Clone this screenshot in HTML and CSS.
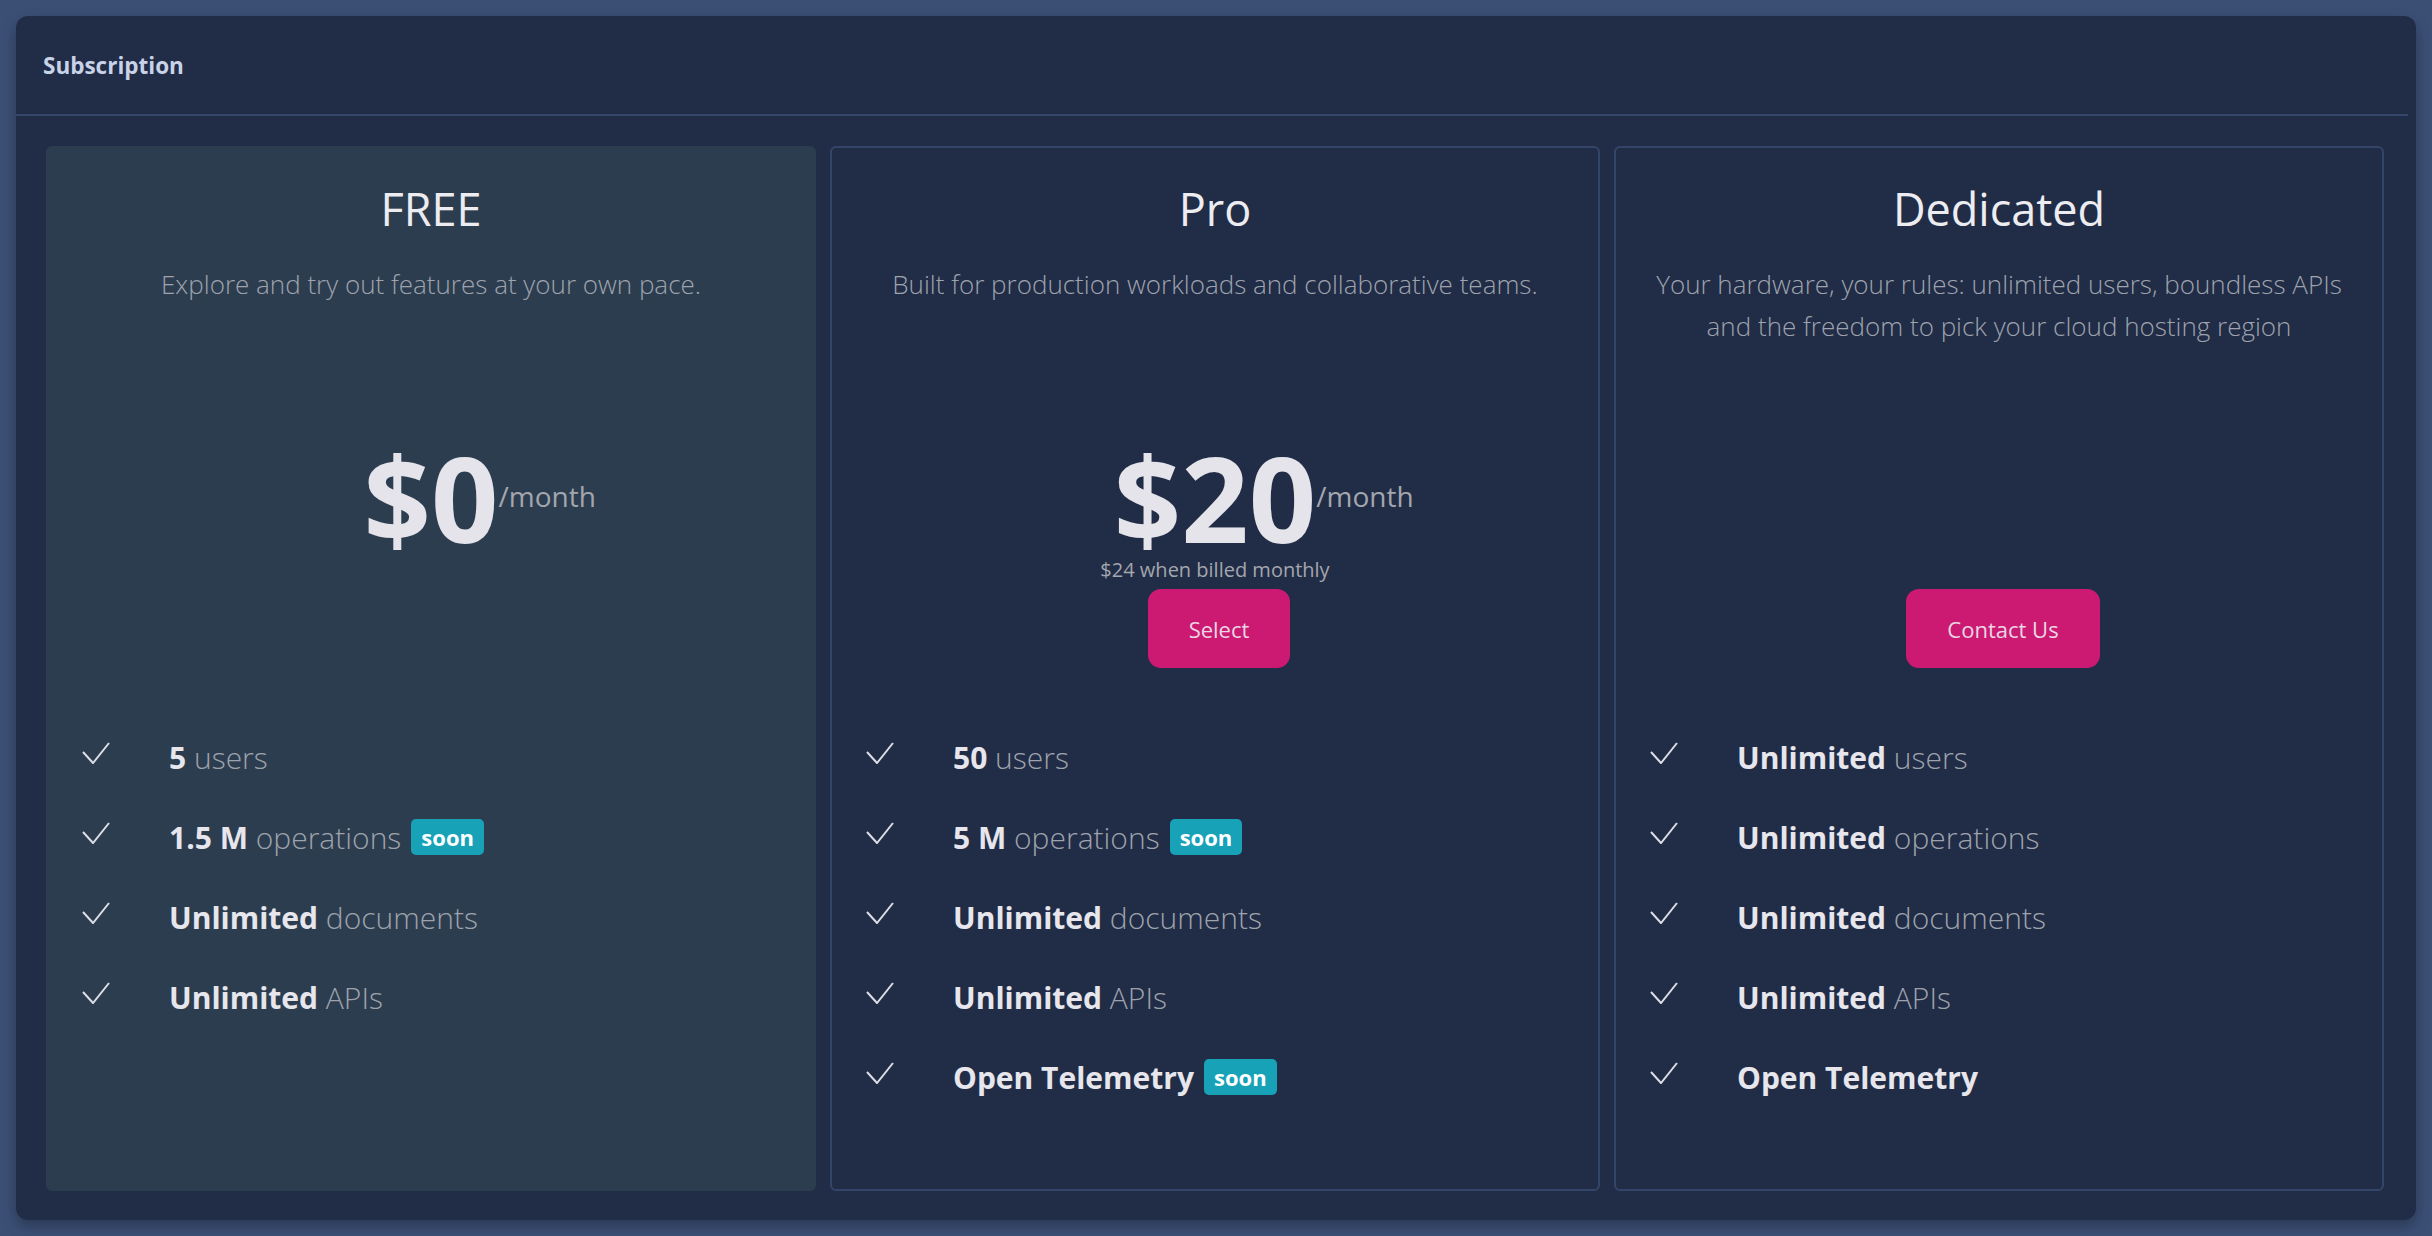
FILE: index.html
```html
<!DOCTYPE html>
<html lang="en">
<head>
<meta charset="utf-8">
<title>Subscription</title>
<link rel="stylesheet" href="styles.css">
</head>
<body>
<div class="panel">
  <div class="panel-header">
    <h1 class="panel-title">Subscription</h1>
  </div>
  <div class="plans">
    <section class="plan plan-free">
      <div class="plan-head">
        <h2 class="plan-name">FREE</h2>
        <p class="plan-desc">Explore and try out features at your own pace.</p>
      </div>
      <div class="plan-price"><div class="price">$0<span class="per">/month</span></div></div>
      <div class="plan-note"></div>
      <div class="plan-action"></div>
      <ul class="features">
        <li><svg class="check" viewBox="0 0 28 22"><path d="M1 10 L11 21 L27 1"/></svg><span class="label"><b>5</b> users</span></li>
        <li><svg class="check" viewBox="0 0 28 22"><path d="M1 10 L11 21 L27 1"/></svg><span class="label"><b>1.5 M</b> operations</span><span class="badge">soon</span></li>
        <li><svg class="check" viewBox="0 0 28 22"><path d="M1 10 L11 21 L27 1"/></svg><span class="label"><b>Unlimited</b> documents</span></li>
        <li><svg class="check" viewBox="0 0 28 22"><path d="M1 10 L11 21 L27 1"/></svg><span class="label"><b>Unlimited</b> APIs</span></li>
      </ul>
    </section>
    <section class="plan">
      <div class="plan-head">
        <h2 class="plan-name">Pro</h2>
        <p class="plan-desc">Built for production workloads and collaborative teams.</p>
      </div>
      <div class="plan-price"><div class="price">$20<span class="per">/month</span></div></div>
      <div class="plan-note">$24 when billed monthly</div>
      <div class="plan-action"><button class="btn">Select</button></div>
      <ul class="features">
        <li><svg class="check" viewBox="0 0 28 22"><path d="M1 10 L11 21 L27 1"/></svg><span class="label"><b>50</b> users</span></li>
        <li><svg class="check" viewBox="0 0 28 22"><path d="M1 10 L11 21 L27 1"/></svg><span class="label"><b>5 M</b> operations</span><span class="badge">soon</span></li>
        <li><svg class="check" viewBox="0 0 28 22"><path d="M1 10 L11 21 L27 1"/></svg><span class="label"><b>Unlimited</b> documents</span></li>
        <li><svg class="check" viewBox="0 0 28 22"><path d="M1 10 L11 21 L27 1"/></svg><span class="label"><b>Unlimited</b> APIs</span></li>
        <li><svg class="check" viewBox="0 0 28 22"><path d="M1 10 L11 21 L27 1"/></svg><span class="label"><b>Open Telemetry</b></span><span class="badge">soon</span></li>
      </ul>
    </section>
    <section class="plan">
      <div class="plan-head">
        <h2 class="plan-name">Dedicated</h2>
        <p class="plan-desc">Your hardware, your rules: unlimited users, boundless APIs and the freedom to pick your cloud hosting region</p>
      </div>
      <div class="plan-price"></div>
      <div class="plan-note"></div>
      <div class="plan-action"><button class="btn">Contact Us</button></div>
      <ul class="features">
        <li><svg class="check" viewBox="0 0 28 22"><path d="M1 10 L11 21 L27 1"/></svg><span class="label"><b>Unlimited</b> users</span></li>
        <li><svg class="check" viewBox="0 0 28 22"><path d="M1 10 L11 21 L27 1"/></svg><span class="label"><b>Unlimited</b> operations</span></li>
        <li><svg class="check" viewBox="0 0 28 22"><path d="M1 10 L11 21 L27 1"/></svg><span class="label"><b>Unlimited</b> documents</span></li>
        <li><svg class="check" viewBox="0 0 28 22"><path d="M1 10 L11 21 L27 1"/></svg><span class="label"><b>Unlimited</b> APIs</span></li>
        <li><svg class="check" viewBox="0 0 28 22"><path d="M1 10 L11 21 L27 1"/></svg><span class="label"><b>Open Telemetry</b></span></li>
      </ul>
    </section>
  </div>
</div>
</body>
</html>
```

FILE: styles.css
```css
* { box-sizing: border-box; }

html, body {
  margin: 0;
  height: 100%;
}

body {
  padding: 16px;
  background: #3b4f75;
  font-family: "Open Sans", "Noto Sans", "Liberation Sans", sans-serif;
  color: #e6e6ec;
}

.panel {
  height: 1204px;
  background: #212c47;
  border-radius: 12px;
  box-shadow: 0 6px 14px rgba(0, 0, 0, 0.28);
  display: flex;
  flex-direction: column;
}

.panel-header {
  height: 100px;
  flex: none;
  display: flex;
  align-items: center;
  padding-left: 27px;
  margin-right: 8px;
  border-bottom: 2px solid #34466a;
}

.panel-title {
  margin: 0;
  font-size: 22.5px;
  font-weight: 700;
  color: #c9d3e8;
  line-height: 1;
  padding-top: 2px;
}

.plans {
  flex: 1;
  display: grid;
  grid-template-columns: repeat(3, 1fr);
  gap: 14px;
  padding: 30px 32px 29px 30px;
}

.plan {
  border: 2px solid #34456a;
  border-radius: 6px;
  display: flex;
  flex-direction: column;
  min-width: 0;
}

.plan-free {
  background: #2d3d50;
  border-color: #2d3d50;
}

.plan-head {
  height: 290px;
  padding-top: 34px;
  text-align: center;
}

.plan-name {
  margin: 0;
  font-size: 45px;
  line-height: 54px;
  font-weight: 400;
  color: #ececf1;
}

.plan-desc {
  margin: 27px 0 0;
  padding: 0 30px;
  font-size: 26px;
  line-height: 42px;
  font-weight: 300;
  color: #9ea3ad;
}

.plan-price {
  height: 120px;
  display: flex;
  justify-content: center;
}

.price {
  position: relative;
  font-size: 118px;
  line-height: 120px;
  font-weight: 700;
  color: #e4e4ea;
}

.per {
  position: absolute;
  left: 100%;
  top: 44px;
  font-size: 28px;
  line-height: 28px;
  font-weight: 400;
  color: #a3a6ad;
  white-space: nowrap;
}

.plan-note {
  height: 31px;
  font-size: 20px;
  line-height: 24px;
  text-align: center;
  color: #a3a6ad;
}

.plan-action {
  height: 80px;
  display: flex;
  justify-content: center;
  padding-left: 8px;
}

.btn {
  height: 79px;
  padding: 0 41px;
  border: none;
  border-radius: 13px;
  background: #cc1a72;
  color: #ead6e4;
  font-family: inherit;
  font-size: 22px;
  font-weight: 400;
}

.features {
  list-style: none;
  margin: 48px 0 0;
  padding: 0 0 0 34px;
}

.features li {
  height: 80px;
  display: flex;
  align-items: center;
}

.check {
  width: 28px;
  height: 22px;
  flex: none;
  margin-right: 59px;
  margin-bottom: 8px;
  fill: none;
  stroke: #dedfe5;
  stroke-width: 2;
}

.label {
  font-size: 30px;
  font-weight: 300;
  color: #9ea3ab;
  white-space: nowrap;
}

.label b {
  font-weight: 700;
  color: #e6e6ec;
}

.badge {
  margin-left: 10px;
  padding: 0 10px;
  height: 36px;
  line-height: 36px;
  border-radius: 5px;
  background: #17a2b8;
  color: #ffffff;
  font-size: 22px;
  font-weight: 700;
}
```
